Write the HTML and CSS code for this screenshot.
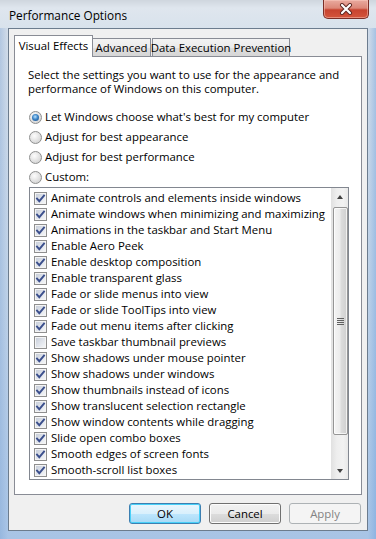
FILE: index.html
```html
<!DOCTYPE html>
<html lang="en">

<head>
  <meta charset="UTF-8">
  <title>Performance Options</title>
  <link rel="stylesheet" href="styles.css">
</head>

<body>
  <div class="window">
    <svg width="0" height="0" class="defs">
      <defs>
        <symbol id="tick" viewBox="0 0 11 11">
          <path d="M2 5.6 L4.3 8.2 L9 2.6" fill="none" stroke="#3b4f8c" stroke-width="1.9" stroke-linecap="square"/>
        </symbol>
      </defs>
    </svg>
    <div class="titlebar">
      <span class="title">Performance Options</span>
      <div class="close-btn">
        <svg width="16" height="12" viewBox="0 0 16 12">
          <path d="M4 2 L12 10 M12 2 L4 10" stroke="#5b2520" stroke-width="4" stroke-linecap="round"/>
          <path d="M4 2 L12 10 M12 2 L4 10" stroke="#fff" stroke-width="2.2" stroke-linecap="round"/>
        </svg>
      </div>
    </div>
    <div class="client">
      <div class="tabs">
        <div class="tab active">Visual Effects</div>
        <div class="tab tab-adv">Advanced</div>
        <div class="tab tab-dep">Data Execution Prevention</div>
      </div>
      <div class="panel">
        <p class="intro">Select the settings you want to use for the appearance and performance of Windows on this computer.</p>
        <div class="radios">
          <div class="radio checked"><span class="rb"></span>Let Windows choose what's best for my computer</div>
          <div class="radio"><span class="rb"></span>Adjust for best appearance</div>
          <div class="radio"><span class="rb"></span>Adjust for best performance</div>
          <div class="radio"><span class="rb"></span>Custom:</div>
        </div>
        <div class="listbox">
          <ul class="items">
            <li><span class="cb"><svg><use href="#tick"/></svg></span>Animate controls and elements inside windows</li>
            <li><span class="cb"><svg><use href="#tick"/></svg></span>Animate windows when minimizing and maximizing</li>
            <li><span class="cb"><svg><use href="#tick"/></svg></span>Animations in the taskbar and Start Menu</li>
            <li><span class="cb"><svg><use href="#tick"/></svg></span>Enable Aero Peek</li>
            <li><span class="cb"><svg><use href="#tick"/></svg></span>Enable desktop composition</li>
            <li><span class="cb"><svg><use href="#tick"/></svg></span>Enable transparent glass</li>
            <li><span class="cb"><svg><use href="#tick"/></svg></span>Fade or slide menus into view</li>
            <li><span class="cb"><svg><use href="#tick"/></svg></span>Fade or slide ToolTips into view</li>
            <li><span class="cb"><svg><use href="#tick"/></svg></span>Fade out menu items after clicking</li>
            <li><span class="cb"></span>Save taskbar thumbnail previews</li>
            <li><span class="cb"><svg><use href="#tick"/></svg></span>Show shadows under mouse pointer</li>
            <li><span class="cb"><svg><use href="#tick"/></svg></span>Show shadows under windows</li>
            <li><span class="cb"><svg><use href="#tick"/></svg></span>Show thumbnails instead of icons</li>
            <li><span class="cb"><svg><use href="#tick"/></svg></span>Show translucent selection rectangle</li>
            <li><span class="cb"><svg><use href="#tick"/></svg></span>Show window contents while dragging</li>
            <li><span class="cb"><svg><use href="#tick"/></svg></span>Slide open combo boxes</li>
            <li><span class="cb"><svg><use href="#tick"/></svg></span>Smooth edges of screen fonts</li>
            <li><span class="cb"><svg><use href="#tick"/></svg></span>Smooth-scroll list boxes</li>
          </ul>
          <div class="scrollbar">
            <div class="sb-btn"><span class="arrow-up"></span></div>
            <div class="sb-track">
              <div class="thumb">
                <span class="grip"></span>
              </div>
            </div>
            <div class="sb-btn"><span class="arrow-down"></span></div>
          </div>
        </div>
      </div>
      <div class="buttons">
        <div class="btn default">OK</div>
        <div class="btn">Cancel</div>
        <div class="btn disabled">Apply</div>
      </div>
    </div>
  </div>
</body>

</html>
```

FILE: styles.css
```css
body {
  margin: 0;
  font-family: "Open Sans", "Noto Sans", sans-serif;
  font-size: 11.4px;
  line-height: 14px;
  color: #000;
}

* {
  box-sizing: border-box;
}

.defs {
  position: absolute;
}

.window {
  width: 376px;
  height: 539px;
  display: flex;
  flex-direction: column;
  background:
    linear-gradient(to right, rgba(120, 160, 210, .35) 0, rgba(255, 255, 255, 0) 8px, rgba(255, 255, 255, 0) 368px, rgba(110, 160, 220, .45) 376px),
    linear-gradient(180deg, #dde5ee 0, #d3dde9 30px, #bfd2e8 55%, #a8c4e6 100%);
}

/* title bar */
.titlebar {
  height: 28px;
  display: flex;
  justify-content: space-between;
  background: linear-gradient(180deg, #cfd6de 0, #dfe6ee 8px, #d8e2ec 28px);
}

.title {
  padding: 8px 0 0 9px;
  font-size: 11.8px;
}

.close-btn {
  width: 46px;
  height: 19px;
  margin-right: 7px;
  border: 1px solid #7a2e27;
  border-top: none;
  border-radius: 0 0 5px 5px;
  background: linear-gradient(180deg, #e9aa9f 0, #dc8778 45%, #c7432f 55%, #d4553c 100%);
  box-shadow: inset 0 0 0 1px rgba(255, 210, 200, .45);
  display: flex;
  align-items: center;
  justify-content: center;
}

/* client area */
.client {
  flex: 1;
  margin: 0 8px 8px;
  background: #f0f0f0;
  border: 1px solid #6c7c8e;
  padding: 6px 5px 0;
}

.tabs {
  display: flex;
  align-items: flex-end;
  height: 21px;
  position: relative;
  z-index: 1;
}

.tab {
  height: 18px;
  border: 1px solid #898c95;
  border-bottom: none;
  background: linear-gradient(180deg, #f3f3f3 0, #ebebeb 50%, #dedede 51%, #d6d6d6 100%);
  display: flex;
  align-items: center;
  justify-content: center;
  white-space: nowrap;
  padding-top: 1px;
}

.tab.active {
  height: 22px;
  width: 79px;
  margin-bottom: -1px;
  background: #fff;
  padding-top: 0;
  padding-bottom: 2px;
}

.tab-adv {
  width: 59px;
  margin-left: -1px;
}

.tab-dep {
  width: 138px;
  margin-left: 1px;
}

.panel {
  width: 348px;
  height: 439px;
  border: 1px solid #898c95;
  background: #fff;
  padding: 11px 0 0 13px;
}

.intro {
  margin: 0;
  width: 322px;
}

.radios {
  margin-top: 11px;
  padding-left: 1px;
}

.radio {
  height: 20px;
  display: flex;
  align-items: center;
}

.rb {
  width: 13px;
  height: 13px;
  border-radius: 50%;
  border: 1px solid #8e8f8f;
  background: radial-gradient(circle at 40% 35%, #fdfdfd 0, #e6e6e6 45%, #c9c9c9 100%);
  margin-right: 3px;
  display: flex;
  align-items: center;
  justify-content: center;
}

.radio.checked .rb::after {
  content: "";
  width: 7px;
  height: 7px;
  border-radius: 50%;
  background: radial-gradient(circle at 45% 40%, #b9e2ff 0, #3d86c8 45%, #14427b 100%);
}

/* list box with checkboxes */
.listbox {
  width: 320px;
  height: 293px;
  margin-left: 1px;
  border: 1px solid #828790;
  display: flex;
}

.items {
  flex: 1;
  list-style: none;
  margin: 0;
  padding: 2px 0 0 4px;
}

.items li {
  height: 16px;
  display: flex;
  align-items: center;
  white-space: nowrap;
}

.cb {
  width: 13px;
  height: 13px;
  margin-right: 4px;
  border: 1px solid #8f8f8f;
  box-shadow: inset 0 0 0 1px #f4f4f4;
  background: linear-gradient(135deg, #c3cad6 0, #dfe3ea 50%, #f8f9fa 100%);
  flex: none;
}

.cb svg {
  display: block;
  width: 11px;
  height: 11px;
}

.scrollbar {
  width: 17px;
  display: flex;
  flex-direction: column;
  background: linear-gradient(90deg, #e3e3e3 0, #eeeeee 30%, #f2f2f2 70%, #e8e8e8 100%);
  border-left: 1px solid #e2e2e2;
}

.sb-btn {
  height: 17px;
  display: flex;
  align-items: center;
  justify-content: center;
}

.arrow-up {
  border: 3.5px solid transparent;
  border-top: none;
  border-bottom: 4px solid #404040;
}

.arrow-down {
  border: 3.5px solid transparent;
  border-bottom: none;
  border-top: 4px solid #404040;
}

.sb-track {
  flex: 1;
}

.thumb {
  margin: 2px 0 0 1px;
  width: 15px;
  height: 228px;
  border: 1px solid #959595;
  border-radius: 2px;
  background: linear-gradient(90deg, #f4f4f4 0, #ececec 45%, #dcdcdc 55%, #cfcfcf 100%);
  box-shadow: inset 0 0 0 1px rgba(255, 255, 255, .7);
  display: flex;
  align-items: center;
  justify-content: center;
}

.grip {
  width: 7px;
  height: 7px;
  background: repeating-linear-gradient(180deg, #606060 0, #606060 1px, transparent 1px, transparent 2px);
}

/* dialog buttons */
.buttons {
  display: flex;
  justify-content: flex-end;
  gap: 8px;
  padding: 8px 1px 0 0;
}

.btn {
  width: 72px;
  height: 21px;
  border: 1px solid #707070;
  border-radius: 3px;
  background: linear-gradient(180deg, #f2f2f2 0, #ebebeb 50%, #dddddd 51%, #cfcfcf 100%);
  box-shadow: inset 0 0 0 1px #fcfcfc;
  display: flex;
  align-items: center;
  justify-content: center;
}

.btn.default {
  border-color: #3c7fb1;
  background: linear-gradient(180deg, #eaf6fd 0, #d9f0fc 50%, #bee6fd 51%, #a7d9f5 100%);
  box-shadow: inset 0 0 0 1px #48d0f8;
}

.btn.disabled {
  color: #838383;
  border-color: #adb2b5;
  background: #f4f4f4;
  box-shadow: none;
}
```
